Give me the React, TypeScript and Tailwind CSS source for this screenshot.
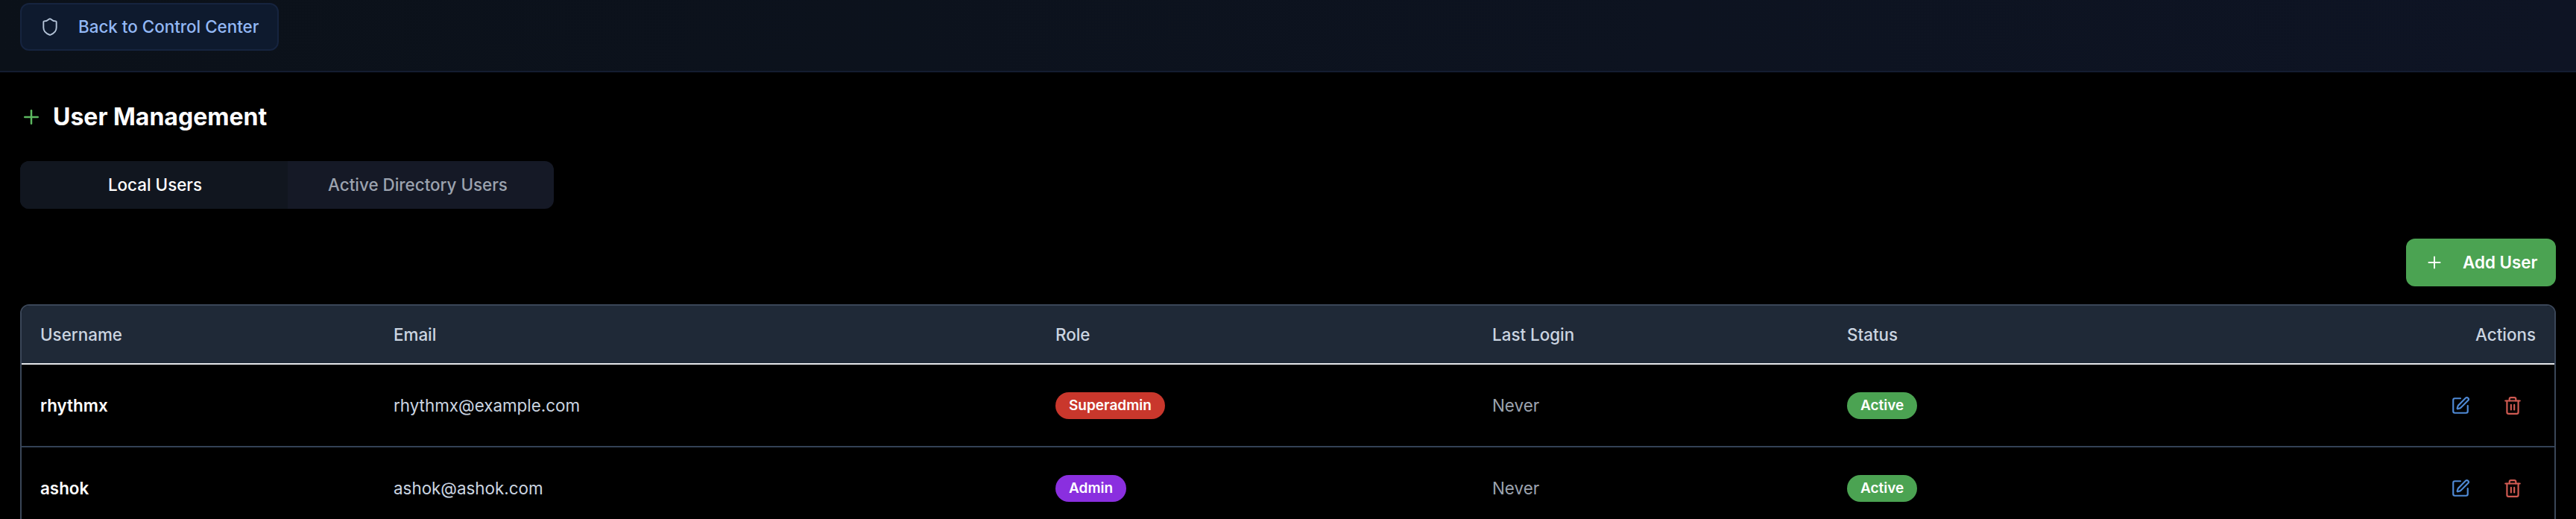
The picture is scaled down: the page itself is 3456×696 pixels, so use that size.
import { Plus, Shield, SquarePen, Trash2 } from "lucide-react";

const users = [
  { name: "rhythmx", email: "rhythmx@example.com", role: "Superadmin", roleClass: "bg-[#c9372c]" },
  { name: "ashok", email: "ashok@ashok.com", role: "Admin", roleClass: "bg-[#8a2fdf]" },
];

const headCell = "px-[25px] text-left align-middle text-[22.4px] font-medium text-[#cbd5e1]";
const bodyCell = "px-[25px] align-middle text-[22.4px]";

function Badge({ label, className }: { label: string; className: string }) {
  return (
    <span className={`inline-flex h-[36px] items-center rounded-full px-[18px] text-[19px] font-semibold text-white ${className}`}>
      {label}
    </span>
  );
}

export default function App() {
  return (
    <div className="h-[696px] overflow-hidden bg-black font-['Inter',sans-serif]">
      <header className="flex h-[97px] items-start border-b-2 border-[#141c30] bg-gradient-to-r from-[#0b1119] to-[#0e1424] px-[27px] pt-[4px]">
        <button className="flex h-[64px] w-[347px] items-center gap-[25px] rounded-xl border-2 border-[#16243f] bg-[#0e1a2e] pl-[25px] text-[22.4px] font-medium text-[#93b8f5]">
          <Shield className="h-[26px] w-[26px] text-[#b4c4d8]" strokeWidth={1.75} />
          Back to Control Center
        </button>
      </header>

      <main className="px-[27px]">
        <div className="mt-[39px] flex h-[42px] items-center gap-[14px]">
          <Plus className="h-[30px] w-[30px] text-[#5cb860]" strokeWidth={2} />
          <h1 className="text-[32px] font-bold leading-none text-white">User Management</h1>
        </div>

        <div className="mt-[38px] flex h-[64px] w-[716px] overflow-hidden rounded-xl bg-[#151926]">
          <div className="flex w-[359px] items-center justify-center bg-[#11161f] pl-[3px] text-[22.4px] font-medium text-white">
            Local Users
          </div>
          <div className="flex flex-1 items-center justify-center pr-[8px] text-[22.4px] font-medium text-[#9ca3af]">
            Active Directory Users
          </div>
        </div>

        <div className="mt-[40px] flex justify-end">
          <button className="flex h-[64px] w-[201px] items-center gap-[25px] rounded-xl bg-[#4ba352] pl-[25px] text-[22.4px] font-semibold text-white">
            <Plus className="h-[26px] w-[26px]" strokeWidth={1.75} />
            Add User
          </button>
        </div>

        <div className="mt-[24px] overflow-hidden rounded-xl border-2 border-[#3a4658]">
          <table className="w-full table-fixed border-collapse">
            <colgroup>
              <col className="w-[474px]" />
              <col className="w-[888px]" />
              <col className="w-[586px]" />
              <col className="w-[476px]" />
              <col className="w-[650px]" />
              <col />
            </colgroup>
            <thead>
              <tr className="h-[78px] border-b-2 border-[#e5e7eb] bg-[#1f2937]">
                <th className={headCell}>Username</th>
                <th className={headCell}>Email</th>
                <th className={headCell}>Role</th>
                <th className={headCell}>Last Login</th>
                <th className={headCell}>Status</th>
                <th className={`${headCell} text-right`}>Actions</th>
              </tr>
            </thead>
            <tbody>
              {users.map((user) => (
                <tr key={user.name} className="h-[111px] border-b-2 border-[#334155]">
                  <td className={`${bodyCell} font-semibold text-white`}>{user.name}</td>
                  <td className={`${bodyCell} text-[#cbd5e1]`}>{user.email}</td>
                  <td className={bodyCell}>
                    <Badge label={user.role} className={user.roleClass} />
                  </td>
                  <td className={`${bodyCell} text-[#9ca3af]`}>Never</td>
                  <td className={bodyCell}>
                    <Badge label="Active" className="bg-[#4ba352]" />
                  </td>
                  <td className={bodyCell}>
                    <div className="flex items-center justify-end gap-[44px] pr-[18px]">
                      <SquarePen className="h-[26px] w-[26px] text-[#4f8ad6]" strokeWidth={2} />
                      <Trash2 className="h-[26px] w-[26px] text-[#d05a52]" strokeWidth={2} />
                    </div>
                  </td>
                </tr>
              ))}
            </tbody>
          </table>
        </div>
      </main>
    </div>
  );
}
